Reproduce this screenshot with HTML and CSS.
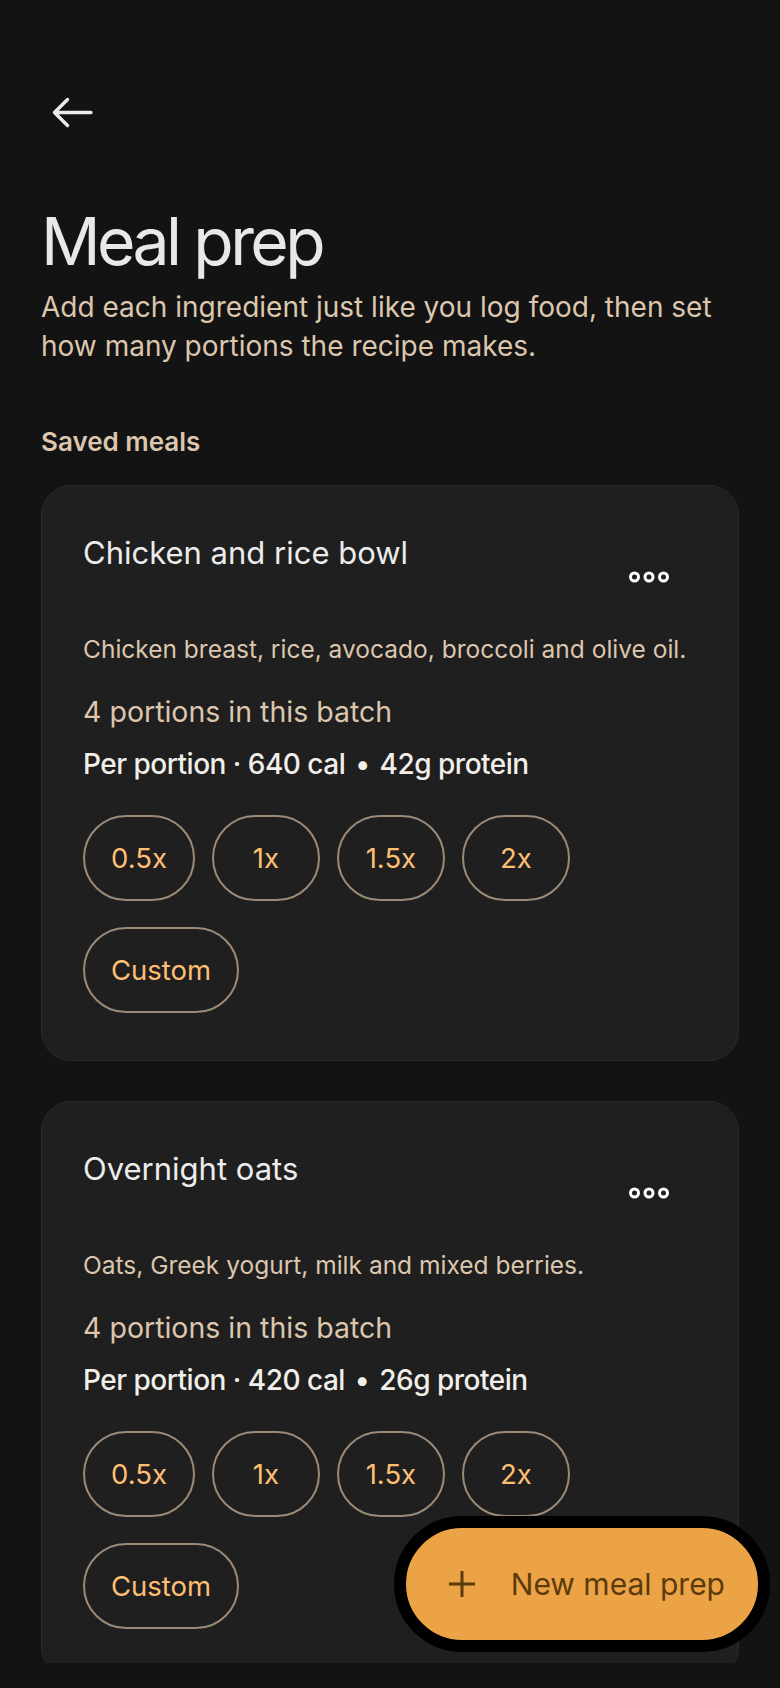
FILE: index.html
```html
<!DOCTYPE html>
<html lang="en">
<head>
    <meta charset="UTF-8">
    <meta name="viewport" content="width=device-width, initial-scale=1.0">
    <title>Meal prep</title>
    <link rel="stylesheet" href="styles.css">
</head>
<body>
    <div class="screen">
        <div class="content">
            <div class="topbar">
                <svg class="back-icon" width="41" height="31" viewBox="0 0 41 31">
                    <path d="M2.5 15.5 H39 M15.5 2.5 L2.5 15.5 L15.5 28.5" fill="none" stroke="#ececec" stroke-width="3.4" stroke-linecap="round" stroke-linejoin="round"/>
                </svg>
            </div>

            <h1 class="page-title">Meal prep</h1>
            <p class="page-intro">Add each ingredient just like you log food, then set how many portions the recipe makes.</p>

            <div class="section-label">Saved meals</div>

            <div class="meal-card">
                <div class="meal-head">
                    <div class="meal-name">Chicken and rice bowl</div>
                    <svg class="more-icon" width="40" height="12" viewBox="0 0 40 12">
                        <circle cx="5.5" cy="6" r="4" fill="none" stroke="#fff" stroke-width="3"/>
                        <circle cx="20" cy="6" r="4" fill="none" stroke="#fff" stroke-width="3"/>
                        <circle cx="34.5" cy="6" r="4" fill="none" stroke="#fff" stroke-width="3"/>
                    </svg>
                </div>
                <div class="meal-desc">Chicken breast, rice, avocado, broccoli and olive oil.</div>
                <div class="meal-batch">4 portions in this batch</div>
                <div class="meal-macros">Per portion · 640 cal <span class="sep">•</span> 42g protein</div>
                <div class="chips">
                    <button class="chip">0.5x</button>
                    <button class="chip">1x</button>
                    <button class="chip">1.5x</button>
                    <button class="chip">2x</button>
                    <button class="chip">Custom</button>
                </div>
            </div>

            <div class="meal-card">
                <div class="meal-head">
                    <div class="meal-name">Overnight oats</div>
                    <svg class="more-icon" width="40" height="12" viewBox="0 0 40 12">
                        <circle cx="5.5" cy="6" r="4" fill="none" stroke="#fff" stroke-width="3"/>
                        <circle cx="20" cy="6" r="4" fill="none" stroke="#fff" stroke-width="3"/>
                        <circle cx="34.5" cy="6" r="4" fill="none" stroke="#fff" stroke-width="3"/>
                    </svg>
                </div>
                <div class="meal-desc">Oats, Greek yogurt, milk and mixed berries.</div>
                <div class="meal-batch">4 portions in this batch</div>
                <div class="meal-macros">Per portion · 420 cal <span class="sep">•</span> 26g protein</div>
                <div class="chips">
                    <button class="chip">0.5x</button>
                    <button class="chip">1x</button>
                    <button class="chip">1.5x</button>
                    <button class="chip">2x</button>
                    <button class="chip">Custom</button>
                </div>
            </div>
        </div>
    </div>

    <button class="fab">
        <svg width="28" height="28" viewBox="0 0 28 28">
            <path d="M14 1 V27 M1 14 H27" fill="none" stroke="#5b3b0b" stroke-width="3"/>
        </svg>
        <span>New meal prep</span>
    </button>
</body>
</html>
```

FILE: styles.css
```css
* {
    box-sizing: border-box;
}
body {
    margin: 0;
    background-color: #131313;
    color: #ececec;
    font-family: "Inter", "Noto Sans", sans-serif;
}
.screen {
    height: 1663px;
    overflow: hidden;
}
.content {
    padding: 0 41px;
}
.topbar {
    height: 128px;
    padding: 97px 0 0 11px;
}
.back-icon {
    display: block;
}
.page-title {
    margin: 77px 0 0;
    font-size: 66px;
    line-height: 72px;
    font-weight: 400;
    letter-spacing: -3.6px;
    color: #e8e8e8;
}
.page-intro {
    margin: 11px 0 0;
    font-size: 28px;
    line-height: 39px;
    color: #dcc6ae;
}
.section-label {
    margin-top: 60px;
    font-size: 26px;
    line-height: 32px;
    font-weight: 600;
    color: #dcc6ae;
}
.meal-card {
    margin-top: 27px;
    margin-bottom: 40px;
    padding: 47px 41px 47px 41px;
    background: #1f1f1f;
    border: 1px solid #2a2a2a;
    border-radius: 30px;
}
.meal-head {
    display: flex;
    justify-content: space-between;
    align-items: flex-start;
    height: 50px;
}
.meal-name {
    font-size: 31px;
    line-height: 40px;
    color: #ececec;
}
.more-icon {
    margin: 38px 28px 0 0;
}
.meal-desc {
    margin-top: 50px;
    font-size: 24.5px;
    line-height: 32px;
    color: #dcc6ae;
}
.meal-batch {
    margin-top: 29px;
    font-size: 28.5px;
    line-height: 36px;
    color: #dcc6ae;
}
.meal-macros {
    margin-top: 16px;
    font-size: 28px;
    line-height: 36px;
    font-weight: 500;
    letter-spacing: -0.5px;
    color: #f2eee9;
}
.sep {
    margin: 0 3px;
}
.chips {
    display: flex;
    flex-wrap: wrap;
    column-gap: 17px;
    row-gap: 26px;
    margin-top: 33px;
}
.chip {
    height: 86px;
    min-width: 108px;
    padding: 0 26px;
    background: none;
    border: 2px solid #9c8a78;
    border-radius: 43px;
    font-family: inherit;
    font-size: 27.5px;
    color: #ffbf73;
}
.fab {
    position: absolute;
    right: 10px;
    top: 1516px;
    height: 136px;
    display: flex;
    align-items: center;
    gap: 35px;
    padding: 0 33px 0 42px;
    background: #eca346;
    border: 12px solid #000;
    border-radius: 68px;
    font-family: inherit;
    font-size: 30px;
    color: #5b3b0b;
}
.fab svg {
    display: block;
}
```
